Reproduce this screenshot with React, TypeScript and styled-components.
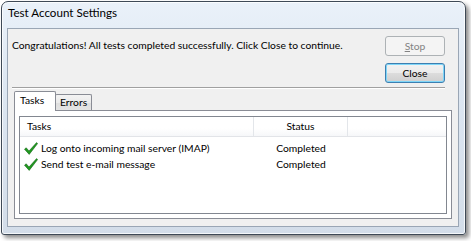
import React from "react";
import styled, { createGlobalStyle } from "styled-components";

const Global = createGlobalStyle`
  html, body { margin: 0; padding: 0; background: #ffffff; }
  body {
    width: 471px;
    height: 241px;
    overflow: hidden;
    font-family: Lato, "Noto Sans", sans-serif;
    color: #000;
  }
  * { box-sizing: border-box; }
`;

const Window = styled.div`
  margin: 1px 0 0 1px;
  width: 465px;
  height: 234px;
  border: 1px solid #3e4956;
  border-radius: 7px 7px 3px 3px;
  background: linear-gradient(180deg, #eaf1f9 0%, #dde7f2 35%, #d3dde9 100%);
  box-shadow: inset 0 0 0 1px rgba(255, 255, 255, 0.75), 3px 3px 4px rgba(0, 0, 0, 0.45);
  display: flex;
  flex-direction: column;
  padding: 0 6px 7px 5px;
`;

const TitleBar = styled.div`
  height: 26px;
  line-height: 22px;
  padding-left: 1px;
  font-size: 11.6px;
  color: #000;
  white-space: nowrap;
`;

const Client = styled.div`
  flex: 1;
  display: flex;
  flex-direction: column;
  border: 1px solid #9aa6b5;
  background: #f0f0f0;
`;

const TopArea = styled.div`
  display: grid;
  grid-template-columns: 1fr auto;
  align-items: start;
  padding: 7px 13px 0 4px;
`;

const Message = styled.div`
  font-size: 10.3px;
  line-height: 19px;
  white-space: nowrap;
`;

const ButtonColumn = styled.div`
  display: flex;
  flex-direction: column;
  gap: 7px;
`;

const Button = styled.button<{ $default?: boolean }>`
  width: 60px;
  height: 20px;
  padding: 0;
  font-family: inherit;
  font-size: 10.3px;
  border-radius: 3px;
  border: 1px solid ${(p) => (p.$default ? "#3c7fb1" : "#707070")};
  color: #000;
  background: linear-gradient(180deg, #f2f2f2 0%, #ebebeb 49%, #dddddd 50%, #cfcfcf 100%);
  box-shadow: inset 0 0 0 1px ${(p) => (p.$default ? "#7fd6f8" : "rgba(255,255,255,0.8)")};
  &:disabled {
    border-color: #adb2b5;
    background: #f4f4f4;
    color: #838383;
    box-shadow: none;
  }
`;

const Mnemonic = styled.span`
  text-decoration: underline;
`;

const Separator = styled.div`
  margin: 4px 13px 0 4px;
  height: 2px;
  border-top: 1px solid #a0a0a0;
  border-bottom: 1px solid #ffffff;
`;

const TabArea = styled.div`
  flex: 1;
  display: flex;
  flex-direction: column;
  margin: 2px 6px 7px 6px;
`;

const TabStrip = styled.div`
  height: 19px;
  display: flex;
  align-items: flex-end;
`;

const Tab = styled.div<{ $active?: boolean; $w: number }>`
  position: relative;
  width: ${(p) => p.$w}px;
  height: ${(p) => (p.$active ? 20 : 16)}px;
  margin-bottom: ${(p) => (p.$active ? -1 : 0)}px;
  margin-left: ${(p) => (p.$active ? 0 : -1)}px;
  z-index: ${(p) => (p.$active ? 1 : 0)};
  border: 1px solid #898c95;
  border-bottom: none;
  border-radius: 2px 2px 0 0;
  background: ${(p) => (p.$active ? "#ffffff" : "linear-gradient(180deg, #f3f3f3 0%, #ebebeb 50%, #dedede 51%, #e4e4e4 100%)")};
  font-size: 10.3px;
  line-height: ${(p) => (p.$active ? 17 : 15)}px;
  padding-left: ${(p) => (p.$active ? 5 : 4)}px;
  white-space: nowrap;
`;

const TabPanel = styled.div`
  flex: 1;
  display: flex;
  flex-direction: column;
  border: 1px solid #898c95;
  background: #ffffff;
  padding: 5px 4px 4px 4px;
`;

const ListView = styled.div`
  flex: 1;
  border: 1px solid #828790;
  background: #ffffff;
  display: flex;
  flex-direction: column;
`;

const columns = "234px 94px 1fr";

const Header = styled.div`
  display: grid;
  grid-template-columns: ${columns};
  height: 20px;
  background: linear-gradient(180deg, #ffffff 0%, #ffffff 60%, #f6f7f9 100%);
  border-bottom: 1px solid #e2e4e8;
`;

const HeaderCell = styled.div<{ $center?: boolean }>`
  font-size: 10.3px;
  line-height: 19px;
  padding-left: ${(p) => (p.$center ? 0 : 7)}px;
  text-align: ${(p) => (p.$center ? "center" : "left")};
  border-right: 1px solid #e3e6ea;
  &:last-child { border-right: none; }
`;

const Body = styled.div`
  padding-top: 3px;
`;

const Row = styled.div`
  display: grid;
  grid-template-columns: ${columns};
  height: 16px;
  align-items: center;
`;

const TaskCell = styled.div`
  display: flex;
  align-items: center;
  gap: 3px;
  padding-left: 4px;
  font-size: 10.3px;
  white-space: nowrap;
`;

const StatusCell = styled.div`
  font-size: 10.3px;
  text-align: center;
`;

const Check = () => (
  <svg width="14" height="13" viewBox="0 0 14 13">
    <path
      d="M0.5 7.2 L2.2 5.8 L5 9 L12.6 0.6 L13.6 1.6 L5.2 12.4 Z"
      fill="#1f9a1f"
      stroke="#17651a"
      strokeWidth="0.6"
      strokeLinejoin="round"
    />
  </svg>
);

const tasks = [
  { name: "Log onto incoming mail server (IMAP)", status: "Completed" },
  { name: "Send test e-mail message", status: "Completed" },
];

export default function App() {
  return (
    <>
      <Global />
      <Window>
        <TitleBar>Test Account Settings</TitleBar>
        <Client>
          <TopArea>
            <Message>
              Congratulations! All tests completed successfully. Click Close to continue.
            </Message>
            <ButtonColumn>
              <Button disabled>
                <Mnemonic>S</Mnemonic>top
              </Button>
              <Button $default>Close</Button>
            </ButtonColumn>
          </TopArea>
          <Separator />
          <TabArea>
            <TabStrip>
              <Tab $active $w={42}>Tasks</Tab>
              <Tab $w={37}>Errors</Tab>
            </TabStrip>
            <TabPanel>
              <ListView>
                <Header>
                  <HeaderCell>Tasks</HeaderCell>
                  <HeaderCell $center>Status</HeaderCell>
                  <HeaderCell />
                </Header>
                <Body>
                  {tasks.map((t) => (
                    <Row key={t.name}>
                      <TaskCell>
                        <Check />
                        {t.name}
                      </TaskCell>
                      <StatusCell>{t.status}</StatusCell>
                    </Row>
                  ))}
                </Body>
              </ListView>
            </TabPanel>
          </TabArea>
        </Client>
      </Window>
    </>
  );
}
